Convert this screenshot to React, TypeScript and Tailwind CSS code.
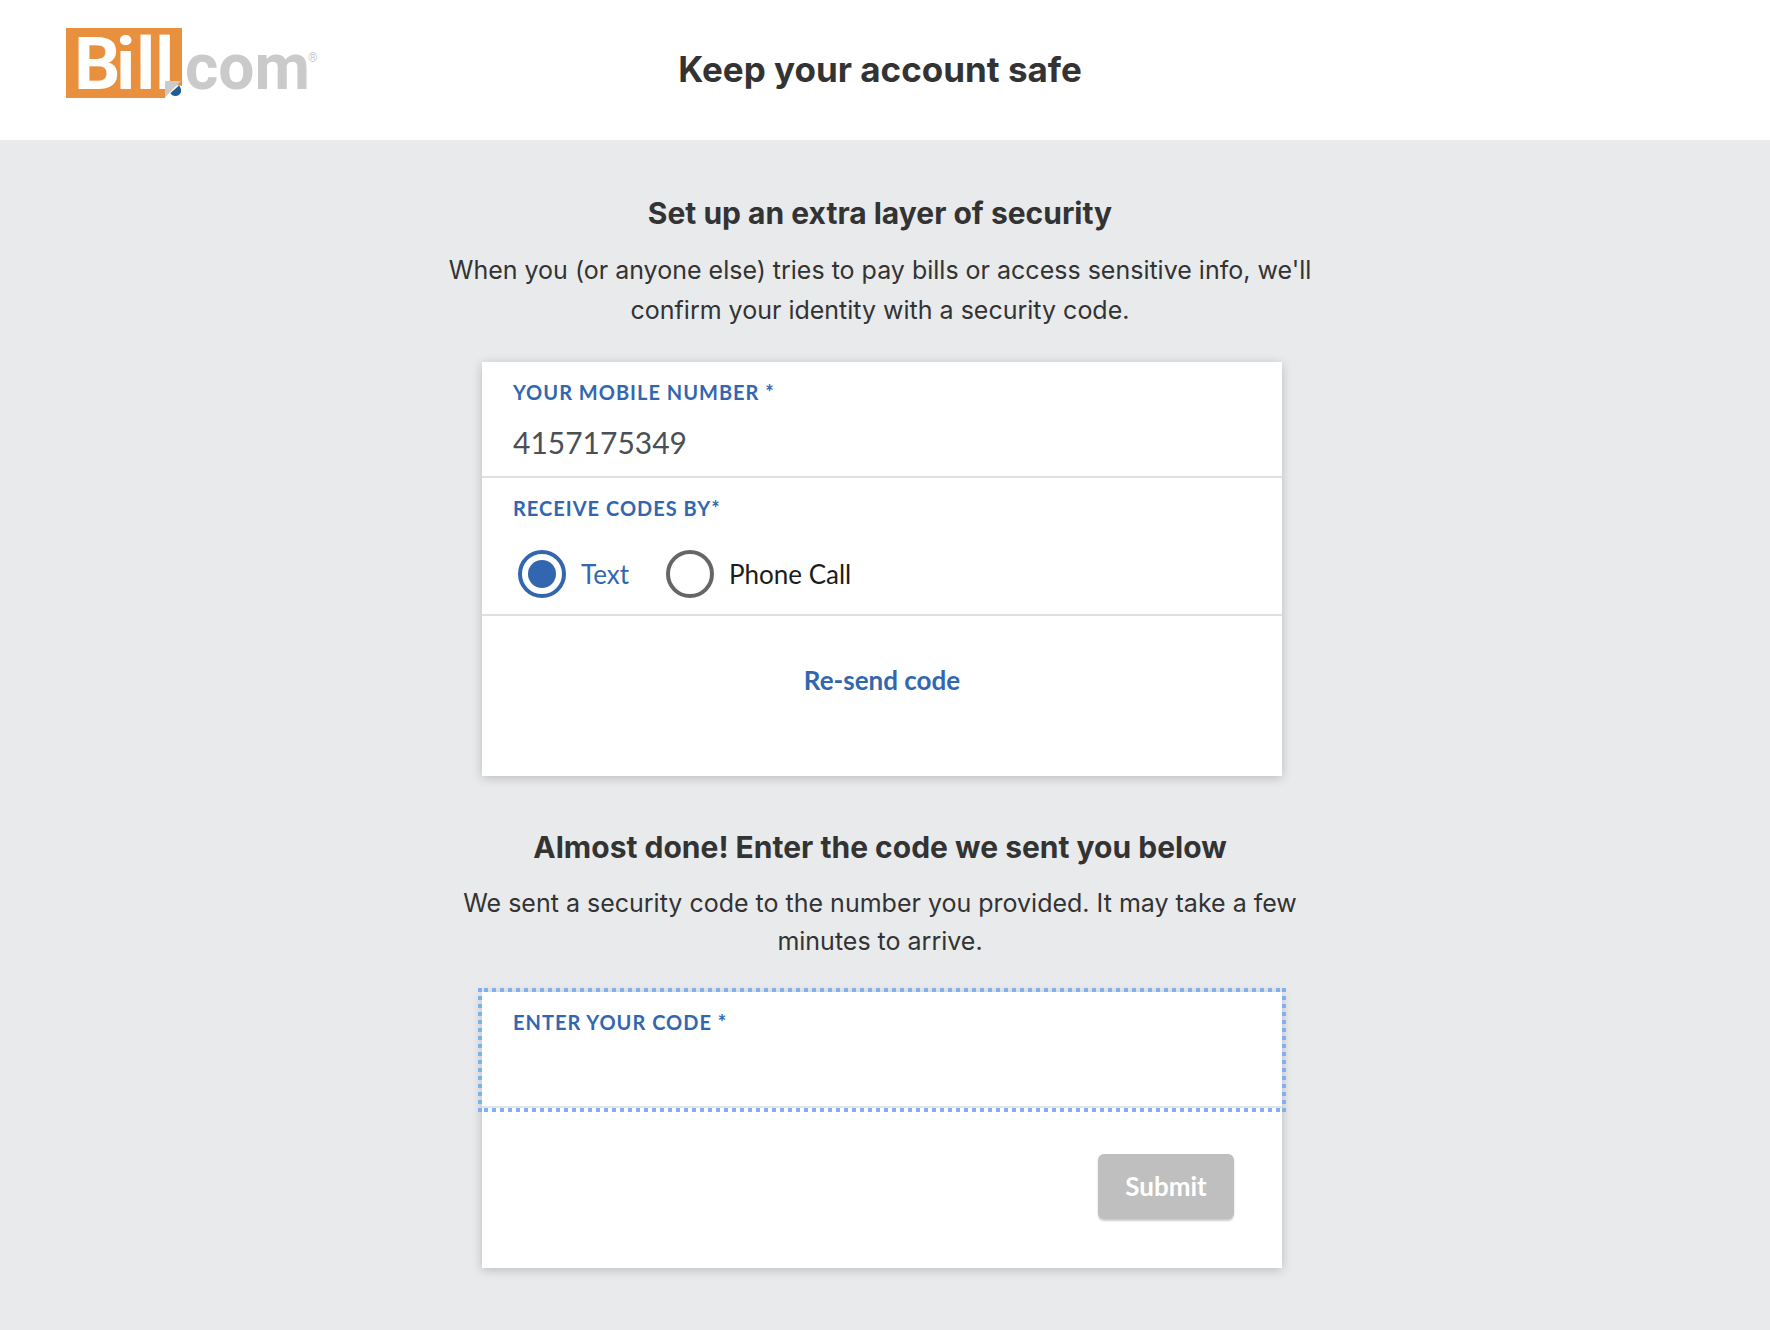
import { useState } from "react";

function Logo() {
  return (
    <svg
      role="img"
      aria-label="Bill.com"
      viewBox="0 -12 256 96"
      className="h-24 w-[256px] shrink-0 overflow-visible"
    >
      <path d="M0 0H116V53L99 70H0Z" fill="#e9903f" />
      <text x="8 50 70 89" y="61" fill="#ffffff" fontFamily="Roboto" fontWeight="700" fontSize="73">
        Bill
      </text>
      <path d="M99 53H116V58L102 70L99 70Z" fill="#e9903f" />
      <path d="M116 58V72H99V69L110 57Z" fill="#ffffff" />
      <path d="M104.500 65L113 57.500C117 62 115 68 109.500 68C107 68 105 67 104.500 65Z" fill="#235c8f" />
      <path d="M99 53H115L99 69Z" fill="#cacaca" />
      <text x="119" y="61" fill="#cacaca" fontFamily="Roboto" fontWeight="700" fontSize="64">
        com
      </text>
      <text x="242" y="34" fill="#cacaca" fontFamily="Roboto" fontSize="12">
        ®
      </text>
    </svg>
  );
}

function Intro({ title, children, textClass }: { title: string; children: string; textClass: string }) {
  return (
    <div className="mx-auto max-w-[900px] pr-1 text-center font-['Inter',sans-serif] text-[#333333]">
      <h2 className="text-[30px] leading-10 font-bold">{title}</h2>
      <p className={textClass}>{children}</p>
    </div>
  );
}

function FocusRing() {
  return (
    <div aria-hidden="true" className="pointer-events-none absolute inset-x-[-4px] top-[-4px] bottom-[-6px]">
      <span className="absolute inset-x-1 top-0 h-1 bg-[repeating-linear-gradient(90deg,transparent_0_2px,#7eb0f2_2px_6px,transparent_6px_8px)]" />
      <span className="absolute inset-x-1 bottom-0 h-1 bg-[repeating-linear-gradient(90deg,transparent_0_2px,#7eb0f2_2px_6px,transparent_6px_8px)]" />
      <span className="absolute inset-y-0 left-0 w-1 bg-[repeating-linear-gradient(180deg,#7eb0f2_0_4px,transparent_4px_8px)]" />
      <span className="absolute inset-y-0 right-0 w-1 bg-[repeating-linear-gradient(180deg,#7eb0f2_0_4px,transparent_4px_8px)]" />
    </div>
  );
}

const methods = ["Text", "Phone Call"];

export default function App() {
  const [method, setMethod] = useState("Text");
  const [phone, setPhone] = useState("4157175349");
  const [code, setCode] = useState("");

  return (
    <div className="flex min-h-screen flex-col bg-[#e9eaec] font-['Lato',sans-serif]">
      <header className="grid h-[140px] grid-cols-[1fr_auto_1fr] bg-white pr-[76px] pl-[66px]">
        <div className="pt-4">
          <Logo />
        </div>
        <h1 className="pt-[47px] font-['Inter',sans-serif] text-[35px] leading-11 font-bold text-[#333333]">
          Keep your account safe
        </h1>
      </header>

      <main className="px-4 pt-[53px] pr-[22px] pb-[62px]">
        <Intro title="Set up an extra layer of security" textClass="mt-[17px] text-[25px] leading-10">
          When you (or anyone else) tries to pay bills or access sensitive info, we'll confirm your identity with a security code.
        </Intro>
        <section className="mx-auto mt-8 max-w-[800px] bg-white shadow-[0_2px_10px_rgba(0,0,0,0.2)]">
          <div className="flex h-[116px] flex-col border-b-2 border-[#dde1e4] px-[31px] pt-[18px]">
            <label htmlFor="phone" className="text-[20px] leading-6 font-bold tracking-wider text-[#3267b0]">
              YOUR MOBILE NUMBER *
            </label>
            <input
              id="phone"
              type="tel"
              value={phone}
              onChange={(e) => setPhone(e.target.value)}
              className="mt-[18px] h-10 w-full bg-transparent text-[30px] leading-10 text-[#4a5056] outline-none"
            />
          </div>
          <fieldset className="h-[138px] border-b-2 border-[#dde1e4] px-[31px] pt-[18px]">
            <legend className="float-left w-full text-[20px] leading-6 font-bold tracking-wider text-[#3267b0]">
              RECEIVE CODES BY*
            </legend>
            <div className="clear-both flex gap-[37px] pt-[30px] pl-[5px]">
              {methods.map((m) => (
                <label
                  key={m}
                  className="flex items-center gap-[15px] text-[26px] leading-8 text-[#1c1c1c] has-checked:text-[#3267b0]"
                >
                  <input
                    type="radio"
                    name="method"
                    checked={method === m}
                    onChange={() => setMethod(m)}
                    className="grid size-12 appearance-none place-items-center rounded-full border-4 border-[#666666] before:size-7 before:rounded-full checked:border-[#3267b0] checked:before:bg-[#3267b0]"
                  />
                  {m}
                </label>
              ))}
            </div>
          </fieldset>
          <div className="flex h-40 justify-center pt-[46px]">
            <button type="button" className="h-9 text-[26px] leading-9 font-bold text-[#3267b0]">
              Re-send code
            </button>
          </div>
        </section>

        <div className="mt-[51px]">
          <Intro title="Almost done! Enter the code we sent you below" textClass="mt-[17px] text-[25px] leading-[38px]">
            We sent a security code to the number you provided. It may take a few minutes to arrive.
          </Intro>
        </div>
        <section className="mx-auto mt-8 max-w-[800px] bg-white shadow-[0_2px_10px_rgba(0,0,0,0.2)]">
          <div className="relative flex h-[116px] flex-col border-b-2 border-[#e3e4e6] px-[31px] pt-[18px]">
            <label htmlFor="code" className="text-[20px] leading-6 font-bold tracking-wider text-[#3267b0]">
              ENTER YOUR CODE *
            </label>
            <input
              id="code"
              type="text"
              value={code}
              onChange={(e) => setCode(e.target.value)}
              className="mt-[18px] h-10 w-full bg-transparent text-[30px] leading-10 text-[#4a5056] outline-none"
            />
            <FocusRing />
          </div>
          <div className="flex h-40 justify-end px-12 pt-[46px]">
            <button
              type="submit"
              className="h-[65px] w-[136px] rounded-md bg-[#bfbfbf] text-[26px] font-bold text-white shadow-[0_2px_2px_rgba(0,0,0,0.2)]"
            >
              Submit
            </button>
          </div>
        </section>
      </main>
    </div>
  );
}
